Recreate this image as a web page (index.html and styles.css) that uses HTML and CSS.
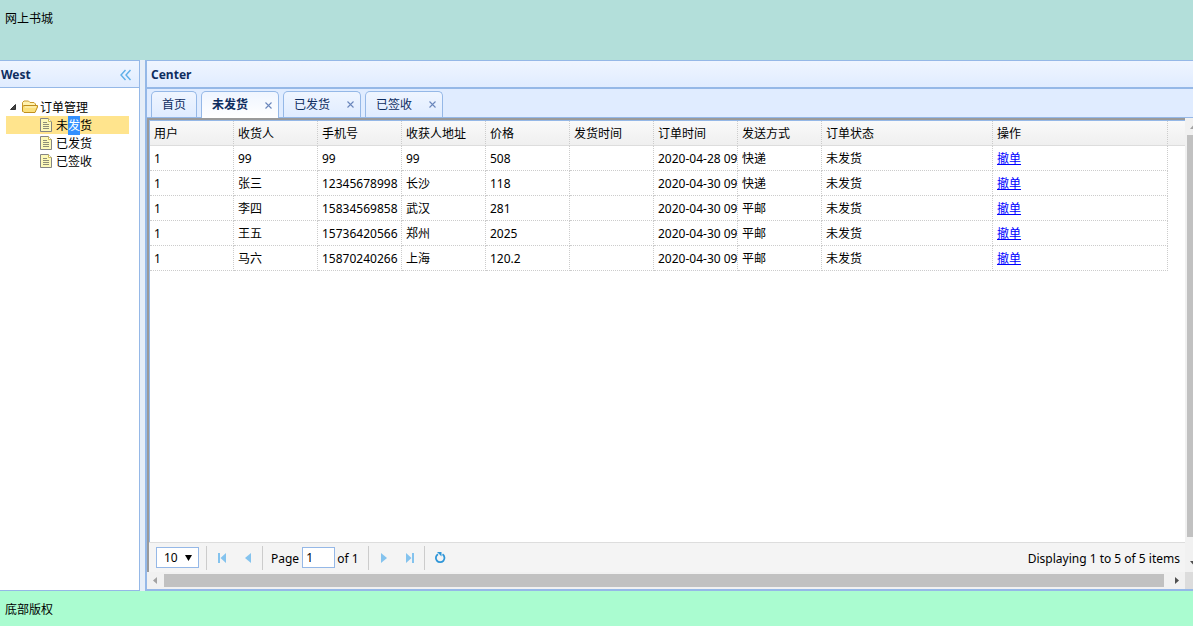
FILE: index.html
```html
<!DOCTYPE html>
<html lang="zh-CN">
<head>
<meta charset="utf-8">
<title>网上书城</title>
<link rel="stylesheet" href="styles.css">
</head>
<body>
<svg class="defs" aria-hidden="true">
  <symbol id="doc" viewBox="0 0 16 16">
    <path d="M2.500 1.500H10.500L13.500 4.500V14.500H2.500Z" fill="#fdf9b8" stroke="#858585"/>
    <path d="M10.500 1.500V4.500H13.500" fill="#fff" stroke="#c9b95a"/>
    <path d="M5 5.500H9M5 7.500H11M5 9.500H11M5 11.500H11" stroke="#8f8f78" fill="none"/>
  </symbol>
</svg>
<div class="layout">
  <header class="north">网上书城</header>
  <div class="middle">
    <aside class="west">
      <div class="panel-header">
        <h2 class="panel-title">West</h2>
        <button class="collapse" type="button" aria-label="Collapse">
          <svg width="12" height="12" viewBox="0 0 12 12"><path d="M5.500 1L1 6L5.500 11M10.500 1L6 6L10.500 11" fill="none" stroke="#5eb0e8" stroke-width="1.400"/></svg>
        </button>
      </div>
      <nav class="tree">
        <div class="node">
          <svg class="hit" viewBox="0 0 16 18"><path d="M9.500 6.500V11.500H4.500Z" fill="#444" stroke="#333"/></svg>
          <svg class="icon" viewBox="0 0 16 16"><path d="M.5 12.500V3.500L2 2H6.500L8 3.500H12L13.500 5V7" fill="#fff3b0" stroke="#c99a2e"/><path d="M.5 12V7.500L2 6.500H15.500V8L13 13.500H2Z" fill="#fbe07a" stroke="#c08f1e"/><path d="M3 8H14" stroke="#fff8cc"/></svg>
          <span>订单管理</span>
        </div>
        <div class="node leaf selected"><svg class="icon"><use href="#doc"/></svg><span>未<mark>发</mark>货</span></div>
        <div class="node leaf"><svg class="icon"><use href="#doc"/></svg><span>已发货</span></div>
        <div class="node leaf"><svg class="icon"><use href="#doc"/></svg><span>已签收</span></div>
      </nav>
    </aside>
    <main class="center">
      <div class="panel-header"><h2 class="panel-title">Center</h2></div>
      <div class="tabs">
        <div class="tab"><button type="button" class="tab-name">首页</button></div>
        <div class="tab active"><button type="button" class="tab-name">未发货</button><button type="button" class="close" aria-label="Close"><svg width="7" height="7" viewBox="0 0 7 7"><path d="M.5.5L6.500 6.500M6.500.5L.5 6.500"/></svg></button></div>
        <div class="tab"><button type="button" class="tab-name">已发货</button><button type="button" class="close" aria-label="Close"><svg width="7" height="7" viewBox="0 0 7 7"><path d="M.5.5L6.500 6.500M6.500.5L.5 6.500"/></svg></button></div>
        <div class="tab"><button type="button" class="tab-name">已签收</button><button type="button" class="close" aria-label="Close"><svg width="7" height="7" viewBox="0 0 7 7"><path d="M.5.5L6.500 6.500M6.500.5L.5 6.500"/></svg></button></div>
      </div>
      <div class="frame">
        <div class="grid-panel">
          <div class="grid-view">
            <table class="grid">
              <colgroup><col class="c"><col class="c"><col class="c"><col class="c"><col class="c"><col class="c"><col class="c"><col class="c"><col class="c-status"><col class="c-action"><col></colgroup>
              <thead><tr><th>用户</th><th>收货人</th><th>手机号</th><th>收获人地址</th><th>价格</th><th>发货时间</th><th>订单时间</th><th>发送方式</th><th>订单状态</th><th>操作</th><td></td></tr></thead>
              <tbody>
                <tr><td>1</td><td>99</td><td>99</td><td>99</td><td>508</td><td></td><td>2020-04-28 09</td><td>快递</td><td>未发货</td><td><a href="#">撤单</a></td></tr>
                <tr><td>1</td><td>张三</td><td>12345678998</td><td>长沙</td><td>118</td><td></td><td>2020-04-30 09</td><td>快递</td><td>未发货</td><td><a href="#">撤单</a></td></tr>
                <tr><td>1</td><td>李四</td><td>15834569858</td><td>武汉</td><td>281</td><td></td><td>2020-04-30 09</td><td>平邮</td><td>未发货</td><td><a href="#">撤单</a></td></tr>
                <tr><td>1</td><td>王五</td><td>15736420566</td><td>郑州</td><td>2025</td><td></td><td>2020-04-30 09</td><td>平邮</td><td>未发货</td><td><a href="#">撤单</a></td></tr>
                <tr><td>1</td><td>马六</td><td>15870240266</td><td>上海</td><td>120.2</td><td></td><td>2020-04-30 09</td><td>平邮</td><td>未发货</td><td><a href="#">撤单</a></td></tr>
              </tbody>
            </table>
          </div>
          <div class="pager">
            <span class="size"><select aria-label="Page size"><option>10</option></select><svg width="7" height="6" viewBox="0 0 7 6"><path d="M0 0H7L3.500 6Z"/></svg></span>
            <i class="sep"></i>
            <button type="button" aria-label="First page"><svg width="16" height="16" viewBox="0 0 16 16"><path d="M4 3H6V13H4ZM12 3V13L6.500 8Z" fill="#84c3ee"/></svg></button>
            <button type="button" aria-label="Previous page"><svg width="16" height="16" viewBox="0 0 16 16"><path d="M11 3V13L5 8Z" fill="#84c3ee"/></svg></button>
            <i class="sep"></i>
            <label class="page"><span>Page</span><input type="text" value="1"></label><span class="total">of 1</span>
            <i class="sep"></i>
            <button type="button" aria-label="Next page"><svg width="16" height="16" viewBox="0 0 16 16"><path d="M5 3V13L11 8Z" fill="#84c3ee"/></svg></button>
            <button type="button" aria-label="Last page"><svg width="16" height="16" viewBox="0 0 16 16"><path d="M12 3H10V13H12ZM4 3V13L9.500 8Z" fill="#84c3ee"/></svg></button>
            <i class="sep"></i>
            <button type="button" aria-label="Refresh"><svg width="16" height="16" viewBox="0 0 16 16"><path d="M10.500 4.300A4.300 4.300 0 1 1 6 4.200" fill="none" stroke="#2f96d8" stroke-width="1.800"/><path d="M5 2H9.500V6.500Z" fill="#2f96d8"/></svg></button>
            <span class="info">Displaying 1 to 5 of 5 items</span>
          </div>
        </div>
        <div class="vscroll"><svg width="17" height="17" viewBox="0 0 17 17"><path d="M5 11H12L8.500 7Z" fill="#a3a3a3"/></svg><div class="vthumb"></div><svg width="17" height="17" viewBox="0 0 17 17"><path d="M5 6H12L8.500 10Z" fill="#505050"/></svg></div>
        <div class="hscroll"><svg width="17" height="17" viewBox="0 0 17 17"><path d="M10 5V12L6 8.500Z" fill="#a3a3a3"/></svg><div class="hthumb"></div><svg width="17" height="17" viewBox="0 0 17 17"><path d="M7 5V12L11 8.500Z" fill="#505050"/></svg></div>
        <div class="corner"></div>
      </div>
    </main>
  </div>
  <footer class="south">底部版权</footer>
</div>
</body>
</html>
```
FILE: styles.css
```css
* { box-sizing: border-box; }
body {
  margin: 0;
  font: 12px/16px "Noto Sans", "Noto Sans CJK SC", sans-serif;
  color: #000;
}
button, input, select { font: inherit; color: inherit; padding: 0; margin: 0; border: 0; background: none; }
svg { display: block; flex: none; }
.defs { position: absolute; width: 0; height: 0; }
.layout { display: flex; flex-direction: column; height: 100vh; background: #e6eef8; }
.north { height: 60px; padding: 11px 5px; background: #b3dfda; }
.south { height: 35px; padding: 11px 5px; background: #aafcd0; }
.middle { flex: 1; min-height: 0; display: flex; gap: 5px; }

.west {
  width: 140px;
  display: flex;
  flex-direction: column;
  border: solid #95b8e7;
  border-width: 1px 1px 1px 0;
  background: #fff;
}
.panel-header {
  display: flex;
  align-items: center;
  justify-content: space-between;
  height: 27px;
  padding: 1px 7px 0 1px;
  border-bottom: 1px solid #95b8e7;
  background: linear-gradient(#eff5ff, #e0ecff);
}
.panel-title { margin: 0; padding-top: 1px; font-size: 12px; font-weight: bold; color: #0e2d5f; }
.tree { padding: 10px 10px 10px 6px; }
.node { display: flex; align-items: center; height: 18px; line-height: 18px; }
.node > span { padding-top: 2px; height: 18px; line-height: 16px; }
.hit { width: 16px; height: 18px; }
.icon { width: 16px; height: 16px; margin-right: 2px; }
.leaf { padding-left: 32px; }
.selected { background: #ffe48d; }
mark { padding: 1px 0; background: #3390ff; color: #fff; }

.center {
  flex: 1;
  min-width: 0;
  display: flex;
  flex-direction: column;
  border: solid #95b8e7;
  border-width: 1px 0 2px 2px;
}
.center .panel-header { padding-left: 4px; height: 28px; border-bottom-width: 2px; }
.tabs {
  display: flex;
  gap: 4px;
  height: 29px;
  padding: 2px 4px 0;
  border-bottom: 1px solid #95b8e7;
  background: #e0ecff;
}
.tab {
  display: flex;
  align-items: center;
  gap: 17px;
  height: 26px;
  padding: 0 10px;
  border: 1px solid #95b8e7;
  border-bottom: 0;
  border-radius: 5px 5px 0 0;
  background: linear-gradient(#eff5ff, #e0ecff);
  color: #0e2d5f;
}
.tab:has(.close) { padding-right: 6px; }
.tab.active { height: 27px; background: linear-gradient(#eff5ff, #fff); font-weight: bold; }
.close svg { fill: none; stroke: #6a86bb; stroke-width: 1.100; }

.frame {
  flex: 1;
  min-height: 0;
  display: grid;
  grid-template-columns: minmax(0, 1fr) 8px;
  grid-template-rows: minmax(0, 1fr) 17px;
}
.grid-panel {
  display: flex;
  flex-direction: column;
  min-height: 0;
  border: solid #9a9a9a;
  border-width: 2px 0 0 2px;
}
.grid-view { flex: 1; overflow: hidden; border: solid #95b8e7; border-width: 1px 0 0 1px; background: #fff; }
.grid { width: 100%; table-layout: fixed; border-collapse: separate; border-spacing: 0; }
.c { width: 84px; }
.c-status { width: 171px; }
.c-action { width: 175px; }
.grid th, .grid td {
  height: 25px;
  padding: 2px 0 0 4px;
  border: dotted #ccc;
  border-width: 0 1px 1px 0;
  font-weight: normal;
  text-align: left;
  white-space: nowrap;
  overflow: hidden;
}
.grid thead { background: linear-gradient(#f9f9f9, #efefef); }
.grid thead th, .grid thead td { border-bottom: 1px solid #ddd; }
.grid thead td { border-right: 0; }
.grid a { color: #00f; }

.pager {
  display: flex;
  align-items: center;
  height: 30px;
  padding: 0 5px 0 7px;
  border-top: 1px solid #ddd;
  background: #f4f4f4;
}
.size { display: grid; align-items: center; width: 43px; height: 21px; border: 1px solid #95b8e7; background: #fff; }
.size > * { grid-area: 1 / 1; }
.size select { appearance: none; width: 100%; padding-left: 7px; }
.size svg { justify-self: end; margin-right: 6px; pointer-events: none; }
.sep { width: 1px; height: 24px; margin: 0 5px 0 7px; background: #ccc; }
.pager button { padding: 0 2px; }
.pager button + button { margin-left: 6px; }
.pager button + .sep { margin-left: 4px; }
.page { display: flex; align-items: center; gap: 3px; padding-left: 3px; }
.page span, .total, .info { padding-top: 2px; }
.page input { width: 33px; height: 21px; padding-left: 3px; border: 1px solid #95b8e7; background: #fff; }
.total { padding-left: 2px; padding-right: 2px; }
.info { margin-left: auto; }

.vscroll { display: flex; flex-direction: column; overflow: hidden; background: #f1f1f1; }
.vthumb { flex: 1; margin: 0 0 18px 2px; background: #c1c1c1; }
.hscroll { display: flex; background: #f1f1f1; }
.hthumb { flex: 1; margin: 2px 4px 2px 0; background: #c1c1c1; }
.corner { background: #dcdcdc; }
```
